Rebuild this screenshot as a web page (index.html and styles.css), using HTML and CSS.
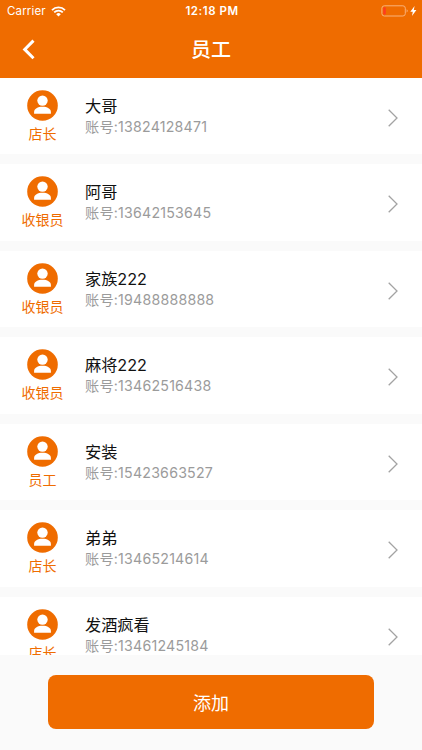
FILE: index.html
```html
<!DOCTYPE html>
<html lang="zh-CN">
<head>
  <meta charset="UTF-8">
  <meta name="viewport" content="width=device-width, initial-scale=1.0">
  <title>员工</title>
  <link rel="stylesheet" href="styles.css">
</head>
<body>
  <svg class="icon-defs">
    <symbol id="icon-user" viewBox="0 0 31 31">
      <circle cx="15.5" cy="15.5" r="15.3" fill="#ef6c00"/>
      <circle cx="15.5" cy="10.6" r="5.2" fill="#fff"/>
      <path d="M7.1 23.8V22c0-3.2 3.6-5.2 8.4-5.2s8.4 2 8.4 5.2v1.8z" fill="#fff"/>
    </symbol>
    <symbol id="icon-arrow" viewBox="0 0 12 20">
      <path d="M1.7 1.7L10 10l-8.3 8.3" fill="none" stroke="#a3a3a3" stroke-width="1.3"/>
    </symbol>
  </svg>

  <header>
    <div class="status-bar">
      <div class="carrier">
        <span>Carrier</span>
        <svg class="wifi" width="15" height="11" viewBox="0 0 15 11">
          <path d="M1 4.1a9.3 9.3 0 0 1 13 0M3.2 6.4a6.1 6.1 0 0 1 8.6 0" fill="none" stroke="#fff" stroke-width="1.8"/>
          <path d="M5.2 8.2a3.3 3.3 0 0 1 4.6 0L7.5 10.6z" fill="#fff"/>
        </svg>
      </div>
      <span class="time">12:18 PM</span>
      <div class="battery">
        <svg width="36" height="12" viewBox="0 0 36 12">
          <rect x=".9" y=".8" width="23.4" height="10.2" rx="2.4" fill="none" stroke="#f9b27a" stroke-width="1"/>
          <rect x="2.3" y="2.3" width="2.5" height="7.2" rx=".8" fill="#ff3b1f"/>
          <path d="M25.6 4.3c1.5.5 1.5 2.7 0 3.2z" fill="#f9b27a"/>
          <path d="M33.6 1l-4.3 5.7h2.5L31 11l4.4-5.9h-2.6z" fill="#fff"/>
        </svg>
      </div>
    </div>
    <div class="nav-bar">
      <svg class="back" width="14" height="22" viewBox="0 0 14 22">
        <path d="M12.5 1.6L3.7 10.4l8.8 8.8" fill="none" stroke="#fff" stroke-width="3"/>
      </svg>
      <h1>员工</h1>
    </div>
  </header>

  <main class="staff-list">
    <div class="staff">
      <div class="role">
        <svg class="avatar"><use href="#icon-user"/></svg>
        <span>店长</span>
      </div>
      <div class="info">
        <div class="name">大哥</div>
        <div class="account">账号:13824128471</div>
      </div>
      <svg class="arrow"><use href="#icon-arrow"/></svg>
    </div>
    <div class="staff">
      <div class="role">
        <svg class="avatar"><use href="#icon-user"/></svg>
        <span>收银员</span>
      </div>
      <div class="info">
        <div class="name">阿哥</div>
        <div class="account">账号:13642153645</div>
      </div>
      <svg class="arrow"><use href="#icon-arrow"/></svg>
    </div>
    <div class="staff">
      <div class="role">
        <svg class="avatar"><use href="#icon-user"/></svg>
        <span>收银员</span>
      </div>
      <div class="info">
        <div class="name">家族222</div>
        <div class="account">账号:19488888888</div>
      </div>
      <svg class="arrow"><use href="#icon-arrow"/></svg>
    </div>
    <div class="staff">
      <div class="role">
        <svg class="avatar"><use href="#icon-user"/></svg>
        <span>收银员</span>
      </div>
      <div class="info">
        <div class="name">麻将222</div>
        <div class="account">账号:13462516438</div>
      </div>
      <svg class="arrow"><use href="#icon-arrow"/></svg>
    </div>
    <div class="staff">
      <div class="role">
        <svg class="avatar"><use href="#icon-user"/></svg>
        <span>员工</span>
      </div>
      <div class="info">
        <div class="name">安装</div>
        <div class="account">账号:15423663527</div>
      </div>
      <svg class="arrow"><use href="#icon-arrow"/></svg>
    </div>
    <div class="staff">
      <div class="role">
        <svg class="avatar"><use href="#icon-user"/></svg>
        <span>店长</span>
      </div>
      <div class="info">
        <div class="name">弟弟</div>
        <div class="account">账号:13465214614</div>
      </div>
      <svg class="arrow"><use href="#icon-arrow"/></svg>
    </div>
    <div class="staff">
      <div class="role">
        <svg class="avatar"><use href="#icon-user"/></svg>
        <span>店长</span>
      </div>
      <div class="info">
        <div class="name">发酒疯看</div>
        <div class="account">账号:13461245184</div>
      </div>
      <svg class="arrow"><use href="#icon-arrow"/></svg>
    </div>
  </main>

  <footer>
    <button class="add-btn">添加</button>
  </footer>
</body>
</html>
```

FILE: styles.css
```css
* {
  box-sizing: border-box;
}
body {
  margin: 0;
  height: 100vh;
  display: flex;
  flex-direction: column;
  overflow: hidden;
  background-color: #fafafa;
  color: #111;
  font-family: Inter, "Noto Sans CJK SC", sans-serif;
}
svg {
  display: block;
  flex-shrink: 0;
}
.icon-defs {
  display: none;
}
header {
  height: 77.5px;
  flex-shrink: 0;
  background-color: #ef6c00;
  color: #fff;
}
.status-bar {
  height: 22px;
  padding: 0 5px 0 7px;
  display: grid;
  grid-template-columns: 1fr auto 1fr;
  align-items: center;
  font-size: 11.5px;
  line-height: 22px;
}
.carrier {
  display: flex;
  align-items: center;
  gap: 5px;
  letter-spacing: 0.15px;
}
.time {
  font-weight: 600;
  letter-spacing: 0.55px;
}
.battery {
  display: flex;
  justify-content: flex-end;
}
.nav-bar {
  height: 55px;
  padding: 0 21px;
  display: grid;
  grid-template-columns: 1fr auto 1fr;
  align-items: center;
}
h1 {
  margin: 0;
  font-size: 20px;
  font-weight: 500;
  line-height: 28px;
}
.staff-list {
  flex: 1;
  min-height: 0;
  overflow: hidden;
}
.staff {
  height: 76.5px;
  margin-bottom: 10px;
  padding-right: 23px;
  display: flex;
  background-color: #fff;
}
.role {
  width: 85px;
  padding-top: 12px;
  display: flex;
  flex-direction: column;
  align-items: center;
  color: #ef6c00;
  font-size: 14px;
  line-height: 20px;
}
.role span {
  margin-top: 3px;
}
.avatar {
  width: 31px;
  height: 31px;
}
.info {
  flex: 1;
  padding-top: 18px;
}
.name {
  font-size: 16.2px;
  font-weight: 400;
  line-height: 21px;
}
.account {
  color: #9b9b9b;
  font-size: 14.2px;
  line-height: 20px;
  letter-spacing: 0.21px;
}
.arrow {
  width: 12px;
  height: 20px;
  margin-top: 30px;
}
footer {
  height: 95px;
  flex-shrink: 0;
  padding: 20px 48px 0;
}
.add-btn {
  display: block;
  width: 100%;
  height: 54px;
  border: none;
  border-radius: 8px;
  background-color: #ef6c00;
  color: #fff;
  font-family: inherit;
  font-size: 18px;
  cursor: pointer;
}
```
